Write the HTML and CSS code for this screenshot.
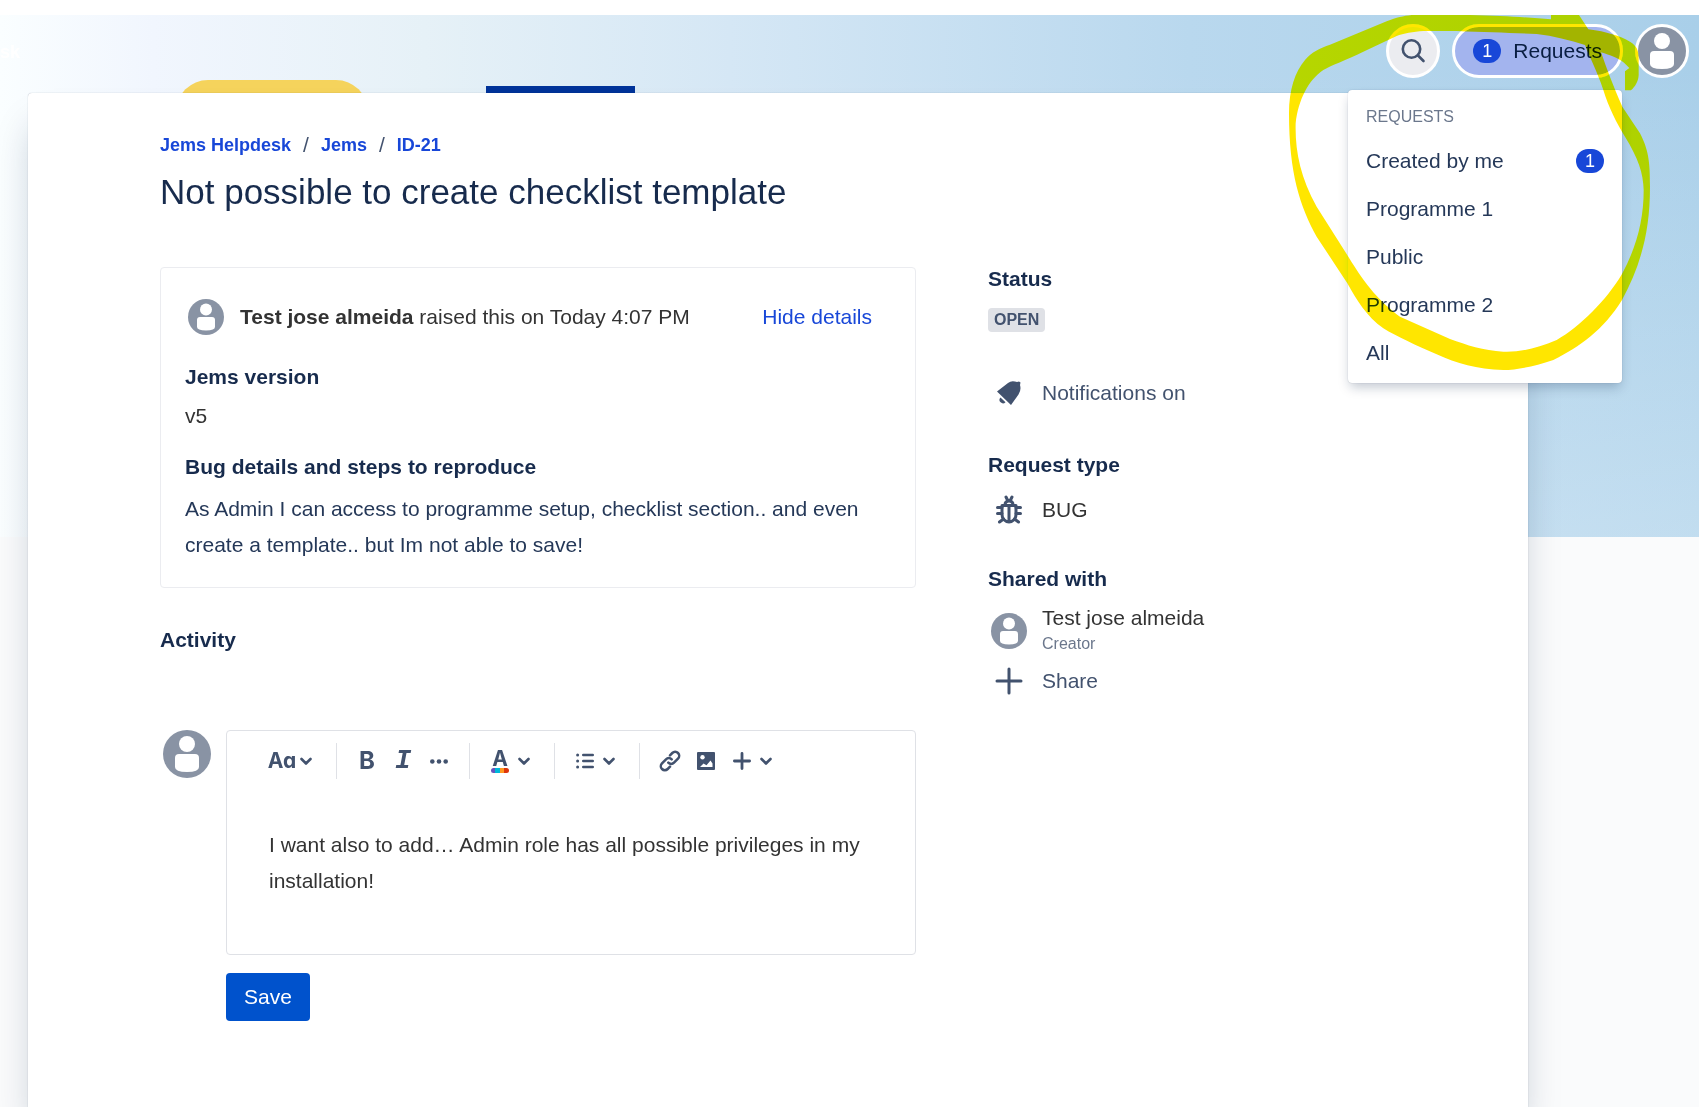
FILE: index.html
```
<!DOCTYPE html>
<html lang="en">
<head>
    <meta charset="UTF-8">
    <meta name="viewport" content="width=device-width, initial-scale=1.0">
    <title>ID-21 - Jems Helpdesk</title>
    <link rel="stylesheet" href="styles.css">
</head>
<body>

    <!-- shared icons -->
    <svg class="sprite" aria-hidden="true">
        <symbol id="avatar" viewBox="0 0 48 48">
            <circle cx="24" cy="24" r="24" fill="#8993a4"/>
            <circle cx="24" cy="14" r="8" fill="#fff"/>
            <path d="M12 28a4 4 0 0 1 4-4h16a4 4 0 0 1 4 4v9q0 5-12 5t-12-5z" fill="#fff"/>
        </symbol>
        <symbol id="chevron" viewBox="0 0 12 12">
            <path d="M1.500 4L6 8.500L10.500 4" fill="none" stroke="currentColor" stroke-width="2.600" stroke-linecap="round" stroke-linejoin="round"/>
        </symbol>
    </svg>

    <header class="banner">
        <svg class="banner-art" width="700" height="90" viewBox="0 0 700 90" aria-hidden="true">
            <rect x="176" y="65" width="192" height="120" rx="32" fill="#f5d35c"/>
            <rect x="486" y="71" width="149" height="40" fill="#003399"/>
        </svg>
        <a class="brand" href="#">sk</a>
        <nav class="actions">
            <button class="search" aria-label="Search">
                <svg width="30" height="30" viewBox="0 0 30 30" fill="none" stroke="#42526e" stroke-width="2.600" stroke-linecap="round">
                    <circle cx="13.500" cy="13" r="8.700"/>
                    <path d="M20 19.500L25.500 25"/>
                </svg>
            </button>
            <div class="requests">
                <button class="requests-button"><span class="badge">1</span>Requests</button>
                <div class="menu">
                    <div class="menu-title">REQUESTS</div>
                    <a href="#">Created by me <span class="badge">1</span></a>
                    <a href="#">Programme 1</a>
                    <a href="#">Public</a>
                    <a href="#">Programme 2</a>
                    <a href="#">All</a>
                </div>
            </div>
            <button class="profile" aria-label="Profile"><svg width="48" height="48"><use href="#avatar"/></svg></button>
        </nav>
    </header>

    <main class="card">
        <nav class="breadcrumbs">
            <a href="#">Jems Helpdesk</a><span>/</span><a href="#">Jems</a><span>/</span><a href="#">ID-21</a>
        </nav>
        <h1>Not possible to create checklist template</h1>

        <div class="columns">
            <div class="content">
                <section class="details">
                    <div class="details-head">
                        <svg width="36" height="36"><use href="#avatar"/></svg>
                        <p><strong>Test jose almeida</strong> raised this on Today 4:07 PM</p>
                        <a href="#">Hide details</a>
                    </div>
                    <h2>Jems version</h2>
                    <p class="value">v5</p>
                    <h2>Bug details and steps to reproduce</h2>
                    <p class="description">As Admin I can access to programme setup, checklist section.. and even create a template.. but Im not able to save!</p>
                </section>

                <h2 class="activity">Activity</h2>

                <form class="comment">
                    <svg class="comment-avatar" width="48" height="48"><use href="#avatar"/></svg>
                    <div class="comment-body">
                        <div class="editor">
                            <div class="toolbar">
                                <button type="button" class="tool wide" aria-label="Text styles"><span class="icon aa">Aa</span><svg width="12" height="12"><use href="#chevron"/></svg></button>
                                <span class="divider"></span>
                                <button type="button" class="tool bold" aria-label="Bold">B</button>
                                <button type="button" class="tool italic" aria-label="Italic">I</button>
                                <button type="button" class="tool" aria-label="More formatting">
                                    <svg width="18" height="18" viewBox="0 0 18 18" fill="currentColor"><circle cx="2.300" cy="9.500" r="2.300"/><circle cx="9" cy="9.500" r="2.300"/><circle cx="15.700" cy="9.500" r="2.300"/></svg>
                                </button>
                                <span class="divider"></span>
                                <button type="button" class="tool wide" aria-label="Text color">
                                    <span class="icon color"><span>A</span>
                                        <svg width="18" height="5" viewBox="0 0 18 5"><path d="M4.500 0H2.500a2.500 2.500 0 0 0 0 5h2z" fill="#6554c0"/><path d="M4 0h5v5H4z" fill="#00b8d9"/><path d="M9 0h4v5H9z" fill="#ff991f"/><path d="M13 0h2.500a2.500 2.500 0 0 1 0 5H13z" fill="#de350b"/></svg>
                                    </span>
                                    <svg width="12" height="12"><use href="#chevron"/></svg>
                                </button>
                                <span class="divider"></span>
                                <button type="button" class="tool wide" aria-label="Lists">
                                    <span class="icon"><svg width="18" height="18" viewBox="0 0 18 18" fill="currentColor"><circle cx="1.600" cy="3" r="1.500"/><circle cx="1.600" cy="9" r="1.500"/><circle cx="1.600" cy="15" r="1.500"/><rect x="6" y="1.700" width="12" height="2.600" rx="1.200"/><rect x="6" y="7.700" width="12" height="2.600" rx="1.200"/><rect x="6" y="13.700" width="12" height="2.600" rx="1.200"/></svg></span>
                                    <svg width="12" height="12"><use href="#chevron"/></svg>
                                </button>
                                <span class="divider"></span>
                                <button type="button" class="tool" aria-label="Link">
                                    <svg width="22" height="22" viewBox="0 0 22 22" fill="none" stroke="currentColor" stroke-width="2.500" stroke-linecap="round" stroke-linejoin="round"><path d="M9.300 12.700a4 4 0 0 0 5.700 0l4-4a4 4 0 0 0-5.700-5.700l-2.300 2.300"/><path d="M12.700 9.300a4 4 0 0 0-5.700 0l-4 4a4 4 0 0 0 5.700 5.700l2.300-2.300"/></svg>
                                </button>
                                <button type="button" class="tool" aria-label="Image">
                                    <svg width="18" height="18" viewBox="0 0 18 18"><rect width="18" height="18" rx="1" fill="currentColor"/><circle cx="5.500" cy="5.200" r="2.200" fill="#fff"/><path d="M3 15l3.500-3.500 3 1.800L13.500 8.500l2 3V15z" fill="#fff"/></svg>
                                </button>
                                <button type="button" class="tool wide" aria-label="Insert">
                                    <span class="icon"><svg width="18" height="18" viewBox="0 0 18 18" stroke="currentColor" stroke-width="2.800" stroke-linecap="round"><path d="M9 1.400v15.200M1.400 9h15.200"/></svg></span>
                                    <svg width="12" height="12"><use href="#chevron"/></svg>
                                </button>
                            </div>
                            <textarea aria-label="Comment">I want also to add… Admin role has all possible privileges in my installation!</textarea>
                        </div>
                        <button type="button" class="save">Save</button>
                    </div>
                </form>
            </div>

            <aside class="sidebar">
                <h2>Status</h2>
                <span class="status">OPEN</span>

                <button class="row notifications">
                    <svg width="42" height="30" viewBox="0 0 42 30"><path d="M9 13.500L20 5q3-2.500 7-1.500l2 .5 2-.5 1.500 1-.5 2.500q1.500 5-1.500 9.500L23 27z" fill="currentColor"/><path d="M12.500 19.500l5 4.700a3 3 0 0 1-5-4.700z" fill="currentColor"/></svg>
                    Notifications on
                </button>

                <h2>Request type</h2>
                <div class="row type">
                    <svg width="42" height="30" viewBox="0 0 42 30" fill="none" stroke="#42526e" stroke-width="3" stroke-linecap="round" stroke-linejoin="round">
                        <path d="M14 10.500h14v9a7 7.500 0 0 1-14 0zM21 11v15"/>
                        <path d="M17 10q0-4 4-4t4 4M18 2l1.500 3M24 2l-1.500 3"/>
                        <path d="M9.500 12.500H14M9.500 18.500H14M11.500 27l4-3M32.500 12.500H28M32.500 18.500H28M30.500 27l-4-3"/>
                    </svg>
                    BUG
                </div>

                <h2>Shared with</h2>
                <div class="person">
                    <svg width="36" height="36"><use href="#avatar"/></svg>
                    <div>
                        <div class="name">Test jose almeida</div>
                        <div class="role">Creator</div>
                    </div>
                </div>
                <button class="row share">
                    <svg width="42" height="30" viewBox="0 0 42 30" stroke="currentColor" stroke-width="3" stroke-linecap="round"><path d="M21 3v24M9 15h24"/></svg>
                    Share
                </button>
            </aside>
        </div>
    </main>

    <!-- highlighter ring around the requests menu -->
    <svg class="marker" width="429" height="400" viewBox="0 0 1287 1200" aria-hidden="true">
        <path fill="#ffe600" fill-rule="evenodd" d="M57 340C57 270 75 215 105 180C125 155 150 145 180 134L350 64C380 52 400 48 425 45H600C700 47 780 53 843 58V45H927L955 88C1010 95 1050 108 1080 125C1100 138 1106 150 1106 175V225C1105 245 1095 260 1083 271H1065V214L1078 204L1062 188C1045 175 1020 165 993 157C1010 205 1030 260 1057 320L1110 400C1135 450 1140 480 1140 560C1140 700 1110 800 1056 900C1000 990 930 1040 850 1080C790 1100 740 1110 700 1110C620 1108 560 1090 500 1063C440 1037 380 1010 340 985C290 950 260 900 232 850L140 710C90 620 57 520 57 340ZM77 370C85 300 115 240 160 210C180 197 230 180 280 155L380 108C400 100 430 95 460 93H560C650 97 720 98 800 102C850 108 900 120 945 135C960 175 980 210 1000 270C1015 320 1040 370 1065 410C1105 475 1120 520 1121 570C1121 660 1100 740 1056 822C1010 900 930 980 860 1020C800 1045 750 1057 700 1055C640 1052 590 1035 540 1017L390 950C330 905 290 860 235 770L140 620C90 530 75 450 77 370Z"/>
    </svg>

</body>
</html>
```
FILE: styles.css
```
* {
    box-sizing: border-box;
}
body {
    position: relative;
    margin: 0;
    padding-top: 15px;
    font-family: "Liberation Sans", Arial, sans-serif;
    font-size: 21px;
    line-height: 24px;
    color: #333;
    background: linear-gradient(#fff 15px, #fafbfc 15px);
    overflow-x: hidden;
}
h1, h2, p {
    margin: 0;
}
h1 {
    margin-top: 13px;
    font-size: 35px;
    line-height: 44px;
    font-weight: normal;
    color: #172b4d;
}
h2 {
    font-size: 21px;
    line-height: 24px;
    color: #172b4d;
}
a {
    color: #1847d8;
    text-decoration: none;
}
button {
    padding: 0;
    border: none;
    background: none;
    font: inherit;
    color: #42526e;
    cursor: pointer;
}
svg {
    display: block;
    flex: none;
}
.sprite {
    position: absolute;
    width: 0;
    height: 0;
}

/* banner */
.banner {
    position: relative;
    display: flex;
    justify-content: space-between;
    align-items: flex-start;
    height: 522px;
    padding: 9px 10px 0 0;
    background: linear-gradient(transparent 10%, rgba(250, 253, 255, 0.3)),
        linear-gradient(90deg, #fafeff 0%, #f1f6fe 9%, #e6f1f7 25%, #d5e7f5 43%, #b9d8ee 70%, #a9cfe9 100%);
}
.banner-art {
    position: absolute;
    left: 0;
    top: 0;
}
.brand {
    padding-top: 16px;
    font-size: 18px;
    font-weight: bold;
    color: #fff;
}
.actions {
    position: relative;
    z-index: 2;
    display: flex;
    gap: 12px;
}
.search, .profile {
    display: flex;
    align-items: center;
    justify-content: center;
    width: 54px;
    height: 54px;
    border: 3px solid #fff;
    border-radius: 27px;
    background: #ebecf0;
}
.requests {
    position: relative;
}
.requests-button {
    display: flex;
    align-items: center;
    gap: 12px;
    height: 54px;
    padding: 0 18px;
    border: 3px solid #fff;
    border-radius: 27px;
    background: #a3b4ee;
    color: #091e42;
}
.badge {
    width: 28px;
    height: 24px;
    border-radius: 12px;
    background: #1847d8;
    color: #fff;
    font-size: 18px;
    text-align: center;
}
.menu {
    position: absolute;
    top: 66px;
    right: 1px;
    width: 274px;
    padding: 12px 0 6px;
    border-radius: 4px;
    background: #fff;
    box-shadow: 0 6px 12px -2px rgba(9, 30, 66, 0.25), 0 0 1px rgba(9, 30, 66, 0.31);
}
.menu-title {
    padding: 3px 18px 8px;
    font-size: 16px;
    color: #6b778c;
}
.menu a {
    display: flex;
    align-items: center;
    justify-content: space-between;
    height: 48px;
    padding: 0 18px;
    color: #253858;
}

/* request card */
.card {
    position: relative;
    z-index: 1;
    min-height: calc(100vh - 93px);
    margin: -444px 171px 0 28px;
    padding: 40px 132px 86px;
    border-radius: 4px 4px 0 0;
    background: #fff;
    box-shadow: 0 0 1px rgba(9, 30, 66, 0.4), 0 28px 36px -8px rgba(9, 30, 66, 0.25);
}
.breadcrumbs {
    display: flex;
    gap: 12px;
    font-size: 18px;
    font-weight: bold;
}
.breadcrumbs span {
    font-size: 21px;
    font-weight: normal;
    color: #42526e;
}
.columns {
    display: flex;
    gap: 72px;
    margin-top: 53px;
}
.content {
    flex: 1;
}
.details {
    padding: 31px 24px 24px;
    border: 1px solid #ebecf0;
    border-radius: 4px;
}
.details-head {
    display: flex;
    align-items: center;
    gap: 16px;
    margin-bottom: 30px;
    padding: 0 19px 0 3px;
}
.details-head a {
    margin-left: auto;
}
.value {
    margin: 9px 0 21px;
    line-height: 36px;
}
.description {
    margin-top: 12px;
    line-height: 36px;
    color: #253858;
}
.activity {
    margin-top: 40px;
}

/* comment editor */
.comment {
    display: flex;
    gap: 15px;
    margin-top: 78px;
    padding-left: 3px;
}
.comment-body {
    flex: 1;
}
.editor {
    border: 1px solid #dfe1e6;
    border-radius: 4px;
}
.toolbar {
    display: flex;
    align-items: center;
    height: 60px;
    padding-left: 37px;
}
.tool {
    display: flex;
    align-items: center;
    justify-content: center;
    width: 36px;
    height: 36px;
}
.tool.wide {
    justify-content: flex-start;
    width: 60px;
}
.icon {
    display: flex;
    justify-content: center;
    width: 36px;
}
.aa {
    font-family: Inter, sans-serif;
    font-weight: 700;
    font-feature-settings: "cv11";
}
.bold {
    font-family: Inter, sans-serif;
    font-size: 24px;
    font-weight: 700;
}
.italic {
    font-family: "Liberation Mono", monospace;
    font-size: 27px;
    font-style: italic;
    font-weight: bold;
    line-height: 36px;
}
.color {
    flex-direction: column;
    align-items: center;
    font-family: Inter, sans-serif;
    font-weight: 700;
    line-height: 18px;
}
.divider {
    width: 1px;
    height: 36px;
    margin: 0 12px;
    background: #dfe1e6;
}
textarea {
    display: block;
    width: 100%;
    height: 163px;
    padding: 36px 42px 0;
    border: none;
    outline: none;
    resize: none;
    background: none;
    font: inherit;
    line-height: 36px;
    color: #333;
}
.save {
    height: 48px;
    margin-top: 18px;
    padding: 0 18px;
    border-radius: 4px;
    background: #0052cc;
    color: #fff;
}

/* sidebar */
.sidebar {
    flex: 0 1 408px;
}
.status {
    display: block;
    width: fit-content;
    margin: 17px 0 46px;
    padding: 0 6px;
    border-radius: 4px;
    background: #dfe1e6;
    color: #42526e;
    font-size: 16px;
    font-weight: bold;
}
.row {
    display: flex;
    align-items: center;
    gap: 12px;
    height: 30px;
}
.notifications {
    margin-bottom: 45px;
}
.type {
    margin: 18px 0 42px;
}
.person {
    display: flex;
    align-items: center;
    gap: 15px;
    margin: 15px 0 10px;
    padding-left: 3px;
}
.role {
    margin-top: 2px;
    font-size: 16px;
    color: #6b778c;
}

.marker {
    position: absolute;
    top: 0;
    right: 0;
    z-index: 3;
    mix-blend-mode: darken;
    pointer-events: none;
}
```
